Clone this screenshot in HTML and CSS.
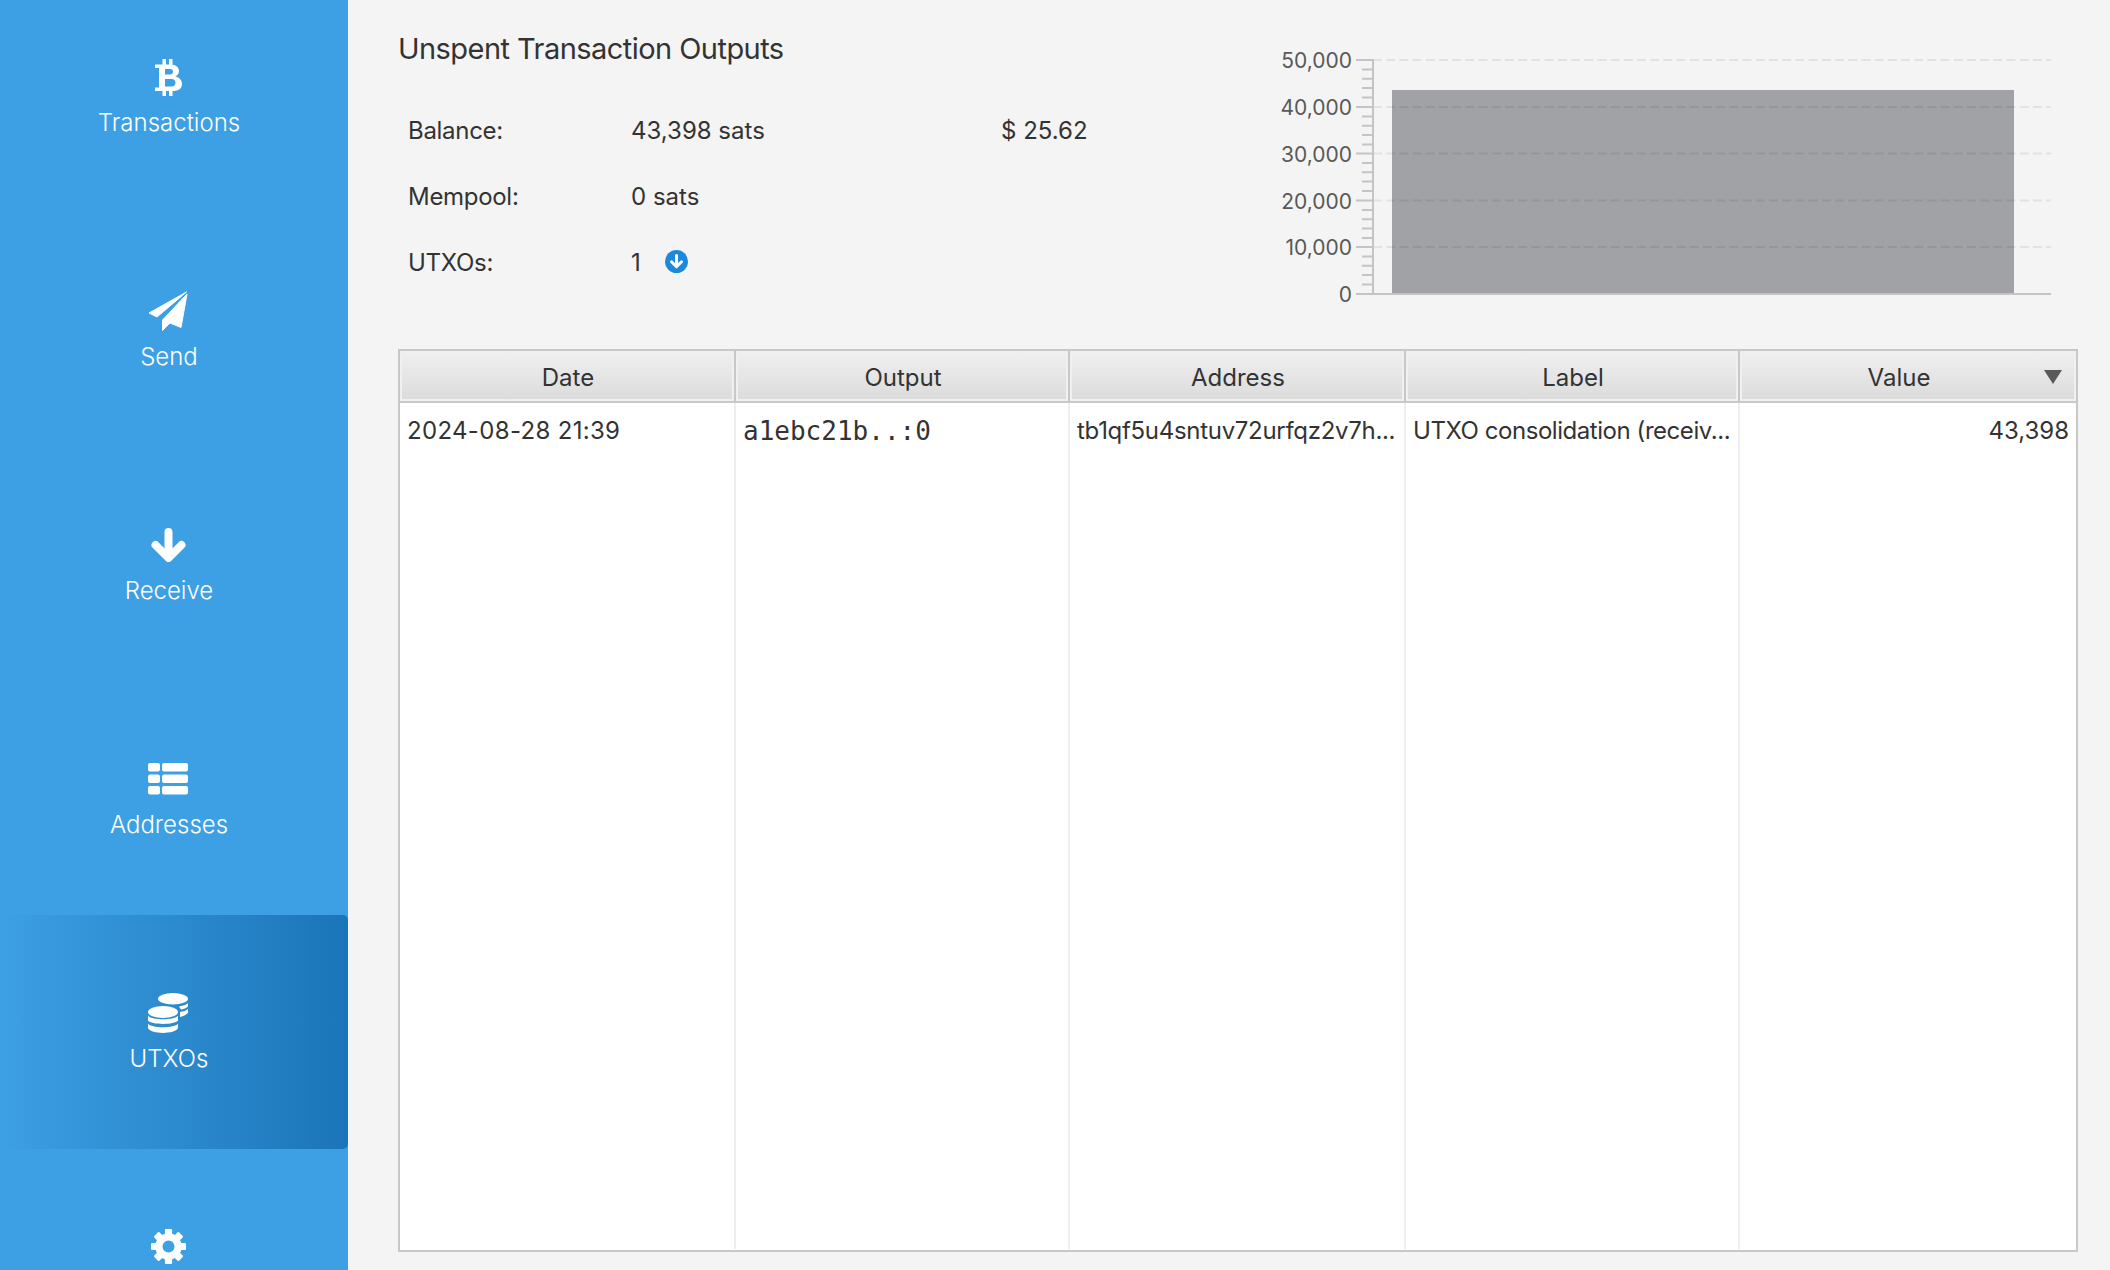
FILE: index.html
```html
<!DOCTYPE html>
<html lang="en">
<head>
<meta charset="utf-8">
<title>UTXOs</title>
<link rel="stylesheet" href="styles.css">
</head>
<body>
<nav class="sidebar">
  <div class="nav-list">
    <div class="nav-item">
      <span class="nav-icon"><svg class="btc" width="27" height="37" viewBox="0 0 27 37"><path fill="#fff" fill-rule="evenodd" d="M0 5.5H16C21 5.5 24 8.5 24 12C24 14.5 22.5 16.5 20.5 17.5C24.5 18.5 27 21 27 25C27 29.5 23.5 32 18 32H0V28.5H4V9H0ZM10 10V15.5H15C17 15.5 18 14.2 18 12.8C18 11.3 17 10 15 10ZM10 20V27.5H16.5C19 27.5 20.5 26 20.5 23.7C20.5 21.5 19 20 16.5 20Z"/><path fill="#fff" d="M7.5 0H11V6H7.5ZM14 0H17.5V6H14ZM7.5 31H11V37H7.5ZM14 31H17.5V37H14Z"/></svg></span>
      <span class="nav-label">Transactions</span>
    </div>
    <div class="nav-item">
      <span class="nav-icon"><svg width="40" height="40" viewBox="0 0 40 40"><path fill="#fff" stroke="#fff" stroke-linejoin="round" d="M38.5 1L1 22L9 26ZM39 3L14.5 29V39.5L22 32L33 36.5Z"/></svg></span>
      <span class="nav-label">Send</span>
    </div>
    <div class="nav-item">
      <span class="nav-icon"><svg width="35" height="34" viewBox="0 0 35 34"><path fill="none" stroke="#fff" stroke-width="8" stroke-linecap="round" stroke-linejoin="round" d="M17.5 4V29M4.5 17L17.5 30L30.5 17"/></svg></span>
      <span class="nav-label">Receive</span>
    </div>
    <div class="nav-item">
      <span class="nav-icon"><svg width="40" height="32" viewBox="0 0 40 32"><g fill="#fff"><rect width="12" height="8.5" rx="2"/><rect x="14" width="26" height="8.5" rx="2"/><rect y="11.5" width="12" height="8.5" rx="2"/><rect x="14" y="11.5" width="26" height="8.5" rx="2"/><rect y="23" width="12" height="8.5" rx="2"/><rect x="14" y="23" width="26" height="8.5" rx="2"/></g></svg></span>
      <span class="nav-label">Addresses</span>
    </div>
    <div class="nav-item active">
      <span class="nav-icon"><svg width="40" height="40" viewBox="0 0 40 40"><g fill="#fff"><ellipse cx="25" cy="5.7" rx="15" ry="5.7"/><path d="M33 13C36 12.5 38.5 11.5 40 10V13.5C38.5 15 36 16 33 16.5L31 13.5Z"/><path d="M32 19C35 18.5 38.5 17.5 40 16V20C38.5 21.5 36 23 32 24Z"/><ellipse cx="15" cy="19" rx="15" ry="6"/><path d="M0 22.5C3 27.5 27 27.5 30 22.5V27.5C27 32 3 32 0 27.5Z"/><path d="M0 30.5C3 35.5 27 35.5 30 30.5V35C27 41.5 3 41.5 0 35Z"/></g></svg></span>
      <span class="nav-label">UTXOs</span>
    </div>
    <div class="nav-item">
      <span class="nav-icon"><svg width="35" height="35" viewBox="-17.5 -17.5 35 35"><circle r="9.6" fill="none" stroke="#fff" stroke-width="7.2"/><g fill="#fff"><rect x="-3.6" y="-17.5" width="7.2" height="7" rx="1"/><rect x="-3.6" y="-17.5" width="7.2" height="7" rx="1" transform="rotate(45)"/><rect x="-3.6" y="-17.5" width="7.2" height="7" rx="1" transform="rotate(90)"/><rect x="-3.6" y="-17.5" width="7.2" height="7" rx="1" transform="rotate(135)"/><rect x="-3.6" y="-17.5" width="7.2" height="7" rx="1" transform="rotate(180)"/><rect x="-3.6" y="-17.5" width="7.2" height="7" rx="1" transform="rotate(225)"/><rect x="-3.6" y="-17.5" width="7.2" height="7" rx="1" transform="rotate(270)"/><rect x="-3.6" y="-17.5" width="7.2" height="7" rx="1" transform="rotate(315)"/></g></svg></span>
      <span class="nav-label"></span>
    </div>
  </div>
</nav>
<main class="main">
  <section class="summary">
    <div class="summary-text">
      <h1 class="title">Unspent Transaction Outputs</h1>
      <div class="stats">
        <span class="stat-label">Balance:</span><span>43,398 sats</span><span>$ 25.62</span>
        <span class="stat-label">Mempool:</span><span>0 sats</span><span></span>
        <span class="stat-label">UTXOs:</span>
        <span class="utxo-count">1<svg class="count-icon" width="23" height="23" viewBox="0 0 23 23"><circle cx="11.5" cy="11.5" r="11.5" fill="#2088d8"/><path fill="none" stroke="#fff" stroke-width="3" stroke-linecap="round" stroke-linejoin="round" d="M11.5 5.5V16.5M6.5 11.8L11.5 16.8L16.5 11.8"/></svg></span>
        <span></span>
      </div>
    </div>
    <svg class="chart" width="818" height="349" viewBox="1260 0 818 349">
      <rect class="bar" x="1392" y="90" width="622" height="203"/>
      <g class="grid">
        <line x1="1373" y1="60" x2="2051" y2="60"/>
        <line x1="1373" y1="107" x2="2051" y2="107"/>
        <line x1="1373" y1="153.5" x2="2051" y2="153.5"/>
        <line x1="1373" y1="200.5" x2="2051" y2="200.5"/>
        <line x1="1373" y1="247" x2="2051" y2="247"/>
      </g>
      <g class="axis">
        <line x1="1373" y1="59" x2="1373" y2="295"/>
        <line x1="1372" y1="294" x2="2051" y2="294"/>
        <path d="M1356 60H1373M1356 107H1373M1356 153.5H1373M1356 200.5H1373M1356 247H1373M1356 294H1373"/>
        <path d="M1362 69.4H1373M1362 78.8H1373M1362 88.1H1373M1362 97.5H1373M1362 116.4H1373M1362 125.8H1373M1362 135.1H1373M1362 144.5H1373M1362 162.9H1373M1362 172.3H1373M1362 181.6H1373M1362 191H1373M1362 209.9H1373M1362 219.3H1373M1362 228.6H1373M1362 238H1373M1362 256.4H1373M1362 265.8H1373M1362 275.1H1373M1362 284.5H1373"/>
      </g>
      <g class="ticks">
        <text x="1352" y="68">50,000</text>
        <text x="1352" y="115">40,000</text>
        <text x="1352" y="161.5">30,000</text>
        <text x="1352" y="208.5">20,000</text>
        <text x="1352" y="255">10,000</text>
        <text x="1352" y="302">0</text>
      </g>
    </svg>
  </section>
  <section class="table">
    <div class="row head">
      <div class="th">Date</div>
      <div class="th">Output</div>
      <div class="th">Address</div>
      <div class="th">Label</div>
      <div class="th sorted">Value<span class="sort-arrow"></span></div>
    </div>
    <div class="row body">
      <div class="td date">2024-08-28 21:39</div>
      <div class="td mono">a1ebc21b..:0</div>
      <div class="td tight">tb1qf5u4sntuv72urfqz2v7h...</div>
      <div class="td tighter">UTXO consolidation (receiv...</div>
      <div class="td num">43,398</div>
    </div>
  </section>
</main>
</body>
</html>
```
FILE: styles.css
```css
* { box-sizing: border-box; }
html, body { height: 100%; }
body {
  margin: 0;
  display: flex;
  height: 1270px;
  overflow: hidden;
  background: #f4f4f4;
  color: #333;
  font-family: Inter, "Liberation Sans", sans-serif;
  font-size: 24px;
}
.sidebar {
  flex: 0 0 348px;
  height: 100%;
  background: #3d9fe4;
  overflow: hidden;
}
.nav-list { margin-top: -21px; }
.nav-item {
  height: 234px;
  padding: 2px 10px 0 0;
  display: flex;
  flex-direction: column;
  align-items: center;
  justify-content: center;
  color: #fff;
}
.nav-item.active {
  background: linear-gradient(to right, #3d9fe4, #1b75b8);
  border-radius: 0 5px 5px 0;
}
.nav-icon {
  height: 40px;
  display: flex;
  align-items: center;
  justify-content: center;
  margin: 0 2px 11px 0;
}
.btc { margin-top: 2px; }
.nav-label { line-height: 30px; min-height: 30px; font-weight: 300; }
.main {
  flex: 1;
  min-width: 0;
  height: 100%;
  padding: 0 32px 18px 50px;
  display: flex;
  flex-direction: column;
}
.summary {
  flex: 0 0 349px;
  display: flex;
  justify-content: space-between;
}
.summary-text { padding-top: 31px; }
.title {
  margin: 0;
  font-size: 29px;
  line-height: 36px;
  font-weight: 400;
  letter-spacing: -0.55px;
  color: #333;
}
.stats {
  margin-top: 49px;
  padding-left: 10px;
  display: grid;
  grid-template-columns: 223px 370px auto;
  grid-auto-rows: 30px;
  row-gap: 36px;
  line-height: 30px;
}
.stat-label { letter-spacing: -0.3px; }
.utxo-count { display: flex; align-items: center; }
.count-icon { margin: -4px 0 0 24px; }
.bar { fill: #a1a2a6; }
.grid line { stroke: #000; stroke-opacity: .07; stroke-width: 2; stroke-dasharray: 9 4.2; }
.axis line, .axis path { stroke: #c4c4c4; stroke-width: 2; fill: none; }
.ticks text { font-size: 21px; fill: #595959; text-anchor: end; }
.table {
  flex: 1;
  min-height: 0;
  display: flex;
  flex-direction: column;
  background: #fff;
  border: 2px solid #c8c8c8;
  padding-bottom: 1px;
}
.row { display: grid; grid-template-columns: 336px 334px 336px 334px 1fr; }
.head { flex: 0 0 52px; }
.body { flex: 1; }
.th {
  display: flex;
  align-items: center;
  justify-content: center;
  padding: 2px 0 0 2px;
  background: linear-gradient(#f0f0f0, #dbdbdb);
  box-shadow: inset 0 0 0 2px #f0f0f0;
  border-right: 2px solid #c8c8c8;
  border-bottom: 2px solid #c8c8c8;
  position: relative;
}
.th:last-child { border-right: 0; }
.th.sorted { padding-right: 20px; }
.sort-arrow {
  position: absolute;
  right: 14px;
  top: 19px;
  width: 0;
  height: 0;
  border: 9px solid transparent;
  border-top: 14px solid #5a5a5a;
  border-bottom: 0;
}
.td {
  padding: 13px 7px 0;
  line-height: 30px;
  white-space: nowrap;
  overflow: hidden;
  border-right: 2px solid #eeeeee;
}
.td:last-child { border-right: 0; }
.date { letter-spacing: 0.33px; }
.tight { letter-spacing: -0.3px; }
.tighter { letter-spacing: -0.45px; }
.mono { font-family: "DejaVu Sans Mono", monospace; font-size: 26px; }
.num { text-align: right; }
```
